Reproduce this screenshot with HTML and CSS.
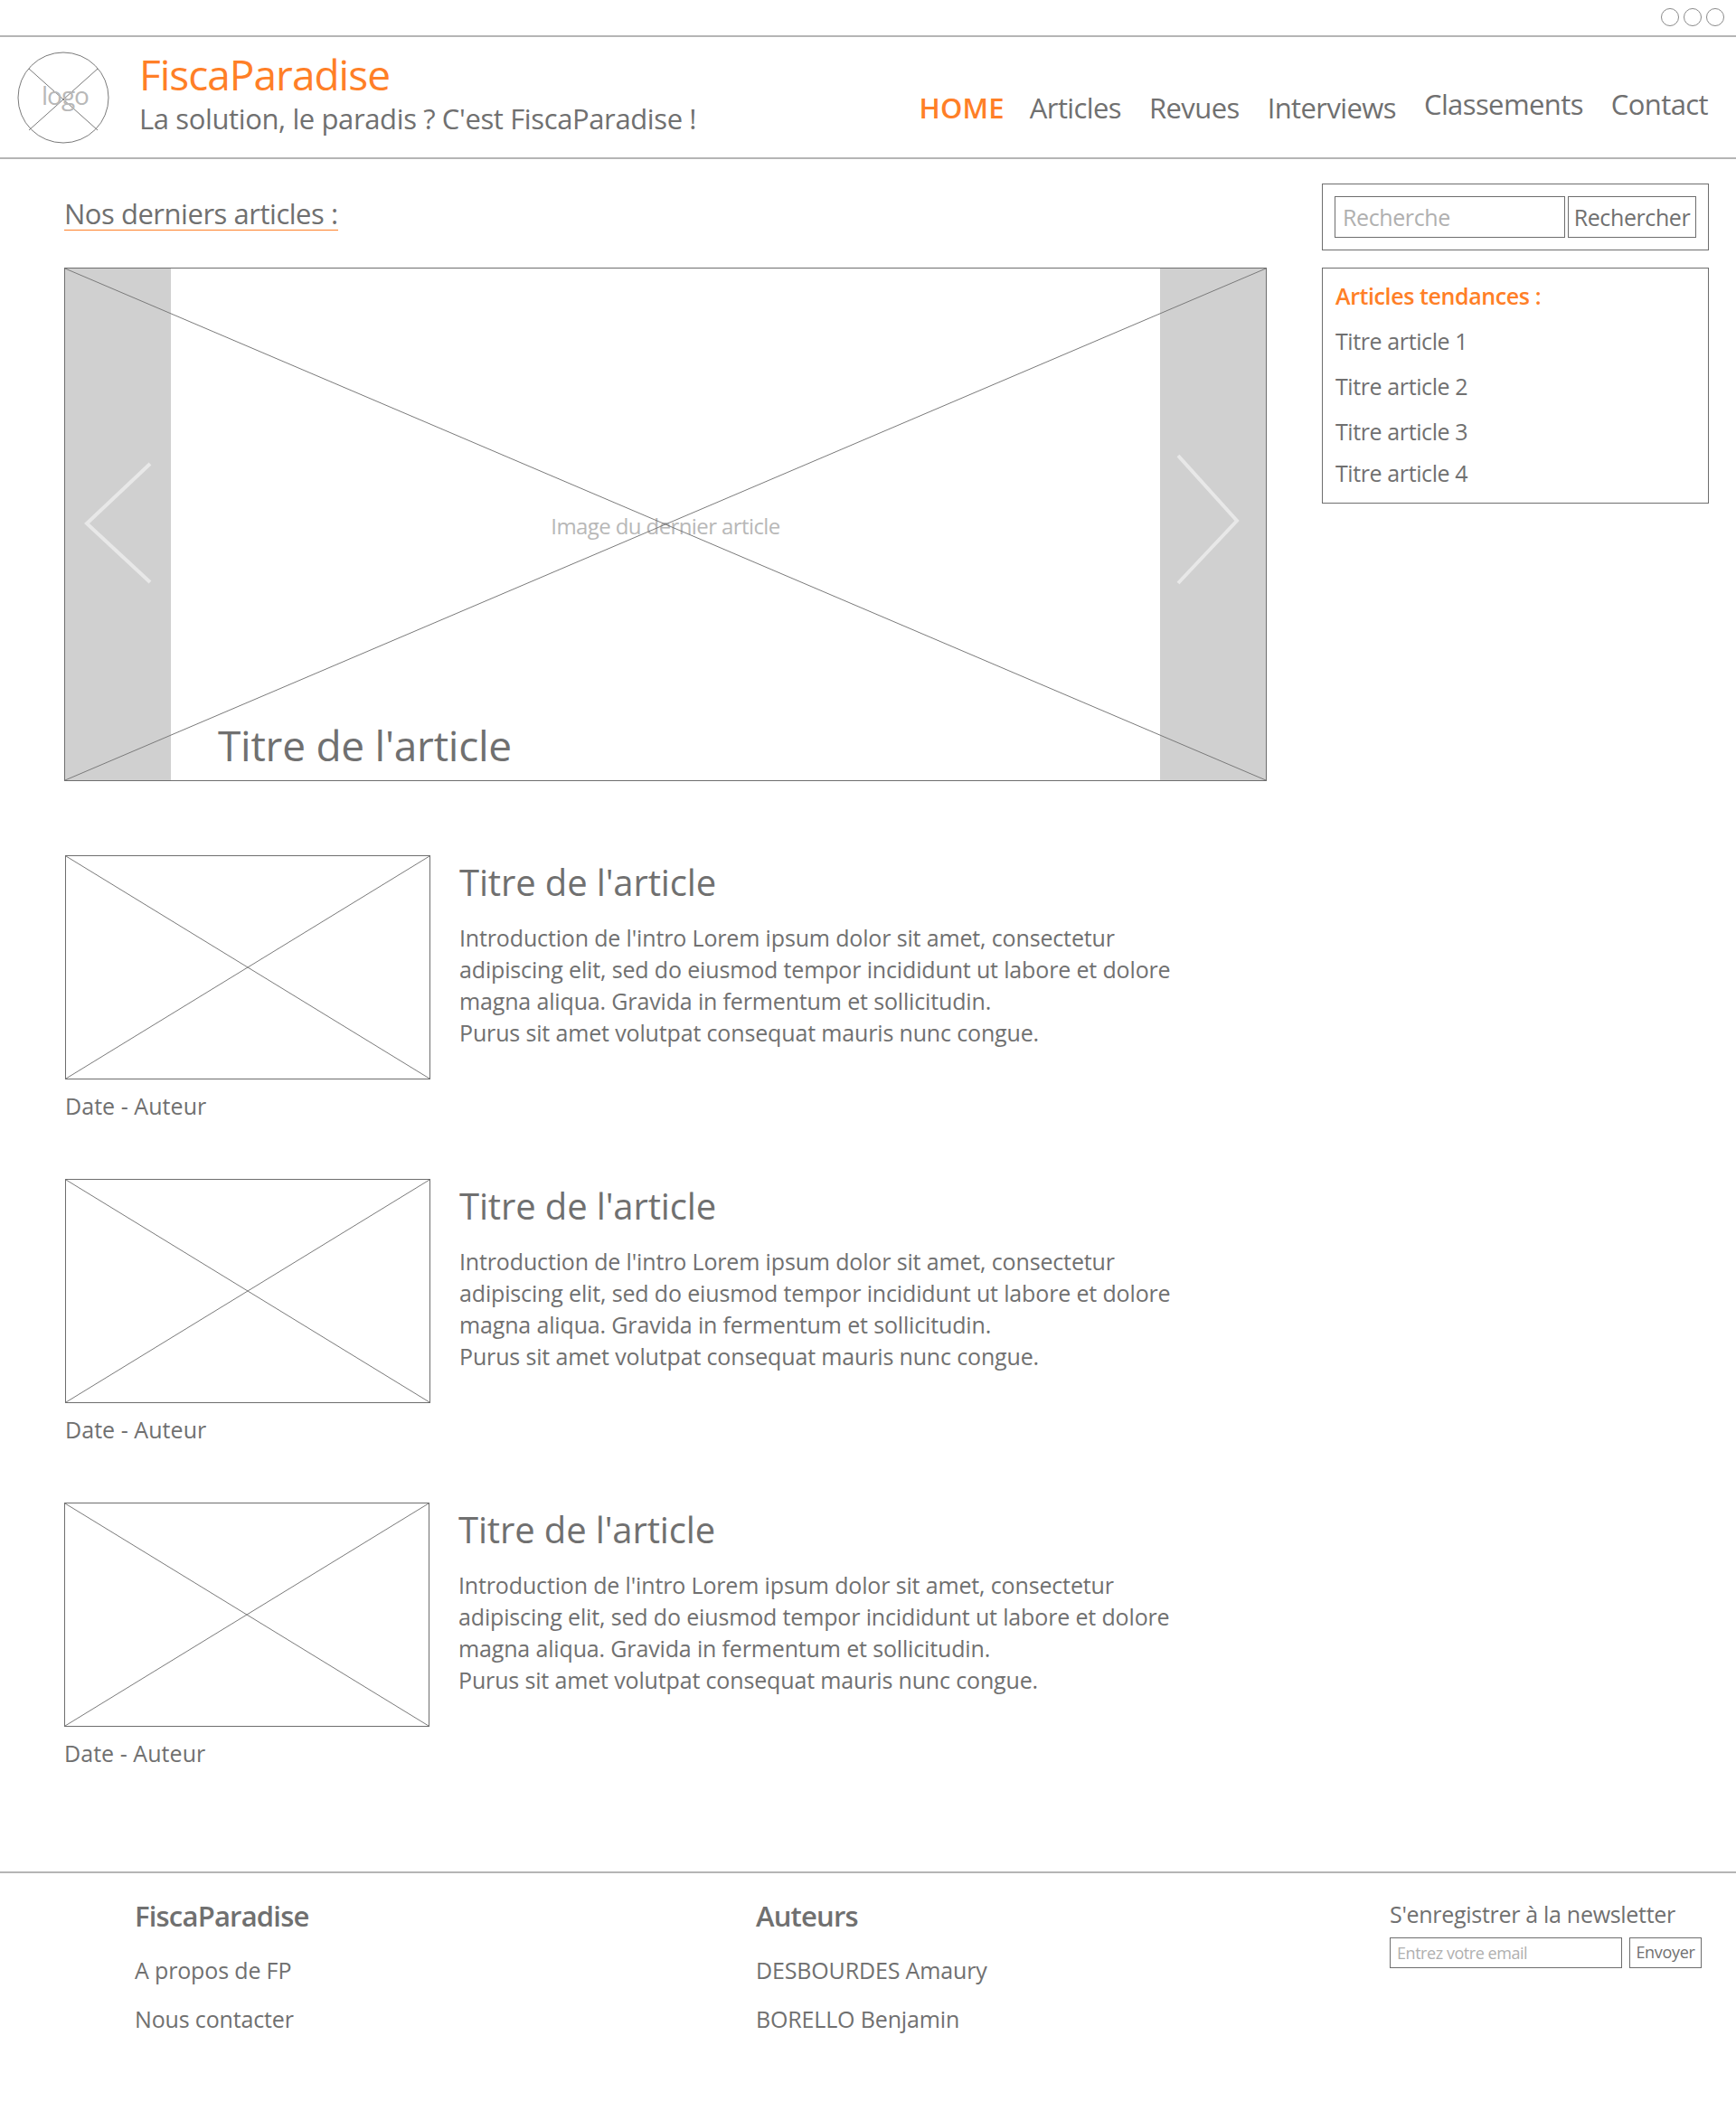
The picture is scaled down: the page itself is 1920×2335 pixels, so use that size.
FILE: index.html
```html
<!DOCTYPE html>
<html lang="fr">
<head>
  <meta charset="UTF-8" />
  <title>FiscaParadise</title>
  <link rel="stylesheet" href="styles.css">
</head>
<body>
  <div class="topbar">
    <span class="dot"></span>
    <span class="dot"></span>
    <span class="dot"></span>
  </div>

  <header class="header">
    <div class="logo">
      <svg class="logo-svg" viewBox="0 0 102 102">
        <circle cx="51" cy="51" r="50" />
        <line x1="13" y1="19" x2="89" y2="87" />
        <line x1="89" y1="19" x2="13" y2="87" />
      </svg>
      <span class="logo-text">logo</span>
    </div>
    <div class="brand">
      <div class="brand-name">FiscaParadise</div>
      <div class="brand-tag">La solution, le paradis ? C'est FiscaParadise !</div>
    </div>
    <nav class="nav">
      <a class="nav-link active">HOME</a>
      <a class="nav-link">Articles</a>
      <a class="nav-link">Revues</a>
      <a class="nav-link">Interviews</a>
      <a class="nav-link raised">Classements</a>
      <a class="nav-link raised">Contact</a>
    </nav>
  </header>

  <div class="main">
    <main class="content">
      <h2 class="section-title">Nos derniers articles :</h2>

      <div class="carousel">
        <div class="side">
          <svg class="chevron" width="118" height="160" viewBox="0 0 118 160">
            <polyline points="94,18 24,84 94,149" />
          </svg>
        </div>
        <div class="slide">
          <span class="slide-label">Image du dernier article</span>
          <span class="slide-title">Titre de l'article</span>
        </div>
        <div class="side">
          <svg class="chevron" width="118" height="160" viewBox="0 0 118 160">
            <polyline points="20,9 85,81 20,150" />
          </svg>
        </div>
        <svg class="cross" viewBox="0 0 100 100" preserveAspectRatio="none">
          <line x1="0" y1="0" x2="100" y2="100" />
          <line x1="100" y1="0" x2="0" y2="100" />
        </svg>
      </div>

      <article class="article">
        <div class="article-left">
          <div class="thumb">
            <svg class="cross" viewBox="0 0 100 100" preserveAspectRatio="none">
              <line x1="0" y1="0" x2="100" y2="100" />
              <line x1="100" y1="0" x2="0" y2="100" />
            </svg>
          </div>
          <div class="meta">Date - Auteur</div>
        </div>
        <div class="article-body">
          <h3 class="article-title">Titre de l'article</h3>
          <p class="article-text">Introduction de l'intro Lorem ipsum dolor sit amet, consectetur<br>adipiscing elit, sed do eiusmod tempor incididunt ut labore et dolore<br>magna aliqua. Gravida in fermentum et sollicitudin.<br>Purus sit amet volutpat consequat mauris nunc congue.</p>
        </div>
      </article>

      <article class="article">
        <div class="article-left">
          <div class="thumb">
            <svg class="cross" viewBox="0 0 100 100" preserveAspectRatio="none">
              <line x1="0" y1="0" x2="100" y2="100" />
              <line x1="100" y1="0" x2="0" y2="100" />
            </svg>
          </div>
          <div class="meta">Date - Auteur</div>
        </div>
        <div class="article-body">
          <h3 class="article-title">Titre de l'article</h3>
          <p class="article-text">Introduction de l'intro Lorem ipsum dolor sit amet, consectetur<br>adipiscing elit, sed do eiusmod tempor incididunt ut labore et dolore<br>magna aliqua. Gravida in fermentum et sollicitudin.<br>Purus sit amet volutpat consequat mauris nunc congue.</p>
        </div>
      </article>

      <article class="article last">
        <div class="article-left">
          <div class="thumb">
            <svg class="cross" viewBox="0 0 100 100" preserveAspectRatio="none">
              <line x1="0" y1="0" x2="100" y2="100" />
              <line x1="100" y1="0" x2="0" y2="100" />
            </svg>
          </div>
          <div class="meta">Date - Auteur</div>
        </div>
        <div class="article-body">
          <h3 class="article-title">Titre de l'article</h3>
          <p class="article-text">Introduction de l'intro Lorem ipsum dolor sit amet, consectetur<br>adipiscing elit, sed do eiusmod tempor incididunt ut labore et dolore<br>magna aliqua. Gravida in fermentum et sollicitudin.<br>Purus sit amet volutpat consequat mauris nunc congue.</p>
        </div>
      </article>
    </main>

    <aside class="sidebar">
      <div class="box search">
        <div class="search-input">Recherche</div>
        <div class="search-btn">Rechercher</div>
      </div>
      <div class="box trends">
        <div class="trends-title">Articles tendances :</div>
        <div class="trend">Titre article 1</div>
        <div class="trend">Titre article 2</div>
        <div class="trend">Titre article 3</div>
        <div class="trend tight">Titre article 4</div>
      </div>
    </aside>
  </div>

  <footer class="footer">
    <div class="foot-col first">
      <div class="foot-title">FiscaParadise</div>
      <div class="foot-link">A propos de FP</div>
      <div class="foot-link">Nous contacter</div>
    </div>
    <div class="foot-col second">
      <div class="foot-title">Auteurs</div>
      <div class="foot-link">DESBOURDES Amaury</div>
      <div class="foot-link">BORELLO Benjamin</div>
    </div>
    <div class="news">
      <div class="news-title">S'enregistrer à la newsletter</div>
      <div class="news-form">
        <div class="news-input">Entrez votre email</div>
        <div class="news-btn">Envoyer</div>
      </div>
    </div>
  </footer>
</body>
</html>
```

FILE: styles.css
```css
body {
  margin: 0;
  background: #fff;
  color: #707070;
  font-family: "Open Sans", "Noto Sans", sans-serif;
  font-size: 25px;
  letter-spacing: -0.15px;
}

/* top strip */
.topbar {
  box-sizing: border-box;
  height: 41px;
  padding: 9px 13px 0 0;
  display: flex;
  justify-content: flex-end;
  gap: 5px;
  border-bottom: 2px solid #b5b5b5;
}
.dot {
  box-sizing: border-box;
  width: 20px;
  height: 20px;
  border: 1px solid #8a8a8a;
  border-radius: 50%;
}

/* header */
.header {
  box-sizing: border-box;
  height: 135px;
  display: flex;
  border-bottom: 2px solid #b5b5b5;
}
.logo {
  position: relative;
  width: 102px;
  height: 102px;
  margin: 16px 0 0 19px;
}
.logo-svg {
  display: block;
  fill: none;
  stroke: #7a7a7a;
  stroke-width: 1;
}
.logo-text {
  position: absolute;
  left: 27px;
  top: 29px;
  font-size: 28px;
  line-height: 38px;
  letter-spacing: -1px;
  color: #b8b8b8;
}
.brand {
  margin: 10px 0 0 33px;
}
.brand-name {
  font-size: 46px;
  line-height: 62px;
  letter-spacing: -1px;
  color: #ff7f27;
}
.brand-tag {
  font-size: 31px;
  line-height: 36px;
  letter-spacing: -0.38px;
}
.nav {
  margin-left: auto;
  padding: 0 31px 34px 0;
  display: flex;
  align-items: flex-end;
  gap: 31px;
  font-size: 31px;
  line-height: 42px;
  letter-spacing: -0.6px;
}
.nav-link.active {
  margin-right: -3px;
  color: #ff7f27;
  font-weight: 600;
  letter-spacing: 0.2px;
}
.nav-link.raised {
  margin-bottom: 4px;
}

/* main columns */
.main {
  height: 1894px;
  display: flex;
  padding-left: 71px;
}
.content {
  width: 1330px;
}
.section-title {
  display: inline-block;
  margin: 42px 0 0;
  font-size: 31px;
  font-weight: 400;
  line-height: 36px;
  letter-spacing: -0.47px;
  border-bottom: 1px solid #ff7f27;
}

/* carousel */
.carousel {
  position: relative;
  box-sizing: border-box;
  height: 568px;
  margin-top: 41px;
  display: flex;
  border: 1px solid #6e6e6e;
}
.side {
  width: 117px;
  background: #d0d0d0;
}
.chevron {
  display: block;
  margin-top: 198px;
  fill: none;
  stroke: #e8e8e8;
  stroke-width: 4;
}
.slide {
  flex: 1;
  position: relative;
}
.slide-label {
  position: absolute;
  left: 0;
  right: 0;
  top: 269px;
  text-align: center;
  font-size: 24px;
  line-height: 32px;
  letter-spacing: -0.6px;
  color: #b8b8b8;
}
.slide-title {
  position: absolute;
  left: 52px;
  top: 496px;
  font-size: 46px;
  line-height: 62px;
  letter-spacing: -0.25px;
}
.cross {
  position: absolute;
  left: 0;
  top: 0;
  width: 100%;
  height: 100%;
  stroke: #7a7a7a;
}
.cross line {
  stroke-width: 1;
  vector-effect: non-scaling-stroke;
}

/* article rows */
.article {
  height: 276px;
  margin-top: 82px;
  display: flex;
  gap: 32px;
  padding-left: 1px;
}
.article.last {
  padding-left: 0;
}
.article-left {
  width: 404px;
}
.thumb {
  position: relative;
  box-sizing: border-box;
  height: 248px;
  border: 1px solid #6e6e6e;
}
.meta {
  margin-top: 12px;
  line-height: 34px;
  letter-spacing: 0.05px;
}
.article-title {
  margin: 0;
  padding-top: 3px;
  font-size: 40px;
  font-weight: 400;
  line-height: 54px;
  letter-spacing: -0.13px;
}
.article-text {
  margin: 17px 0 0;
  line-height: 35px;
  white-space: nowrap;
}

/* sidebar */
.sidebar {
  width: 428px;
  margin-left: 61px;
}
.box {
  box-sizing: border-box;
  border: 1px solid #6e6e6e;
}
.search {
  height: 74px;
  margin-top: 27px;
  padding: 13px;
  display: flex;
  gap: 3px;
  letter-spacing: -0.4px;
}
.search-input {
  box-sizing: border-box;
  width: 255px;
  height: 46px;
  padding-left: 8px;
  line-height: 44px;
  color: #b0b0b0;
  border: 1px solid #6e6e6e;
}
.search-btn {
  box-sizing: border-box;
  width: 142px;
  height: 46px;
  text-align: center;
  line-height: 44px;
  border: 1px solid #6e6e6e;
}
.trends {
  height: 261px;
  margin-top: 19px;
  padding: 12px 14px 0;
  letter-spacing: -0.4px;
}
.trends-title {
  line-height: 36px;
  font-weight: 600;
  color: #ff7f27;
}
.trend {
  margin-top: 14px;
  line-height: 36px;
}
.trend.tight {
  margin-top: 10px;
}

/* footer */
.footer {
  box-sizing: border-box;
  height: 265px;
  display: flex;
  border-top: 2px solid #b5b5b5;
}
.foot-col.first {
  width: 687px;
  padding-left: 149px;
}
.foot-col.second {
  width: 701px;
}
.foot-title {
  margin-top: 26px;
  font-size: 31px;
  font-weight: 600;
  line-height: 42px;
  letter-spacing: -0.8px;
}
.foot-link {
  margin-top: 20px;
  line-height: 34px;
}
.foot-title + .foot-link {
  margin-top: 22px;
}
.news {
  padding-top: 28px;
}
.news-title {
  line-height: 34px;
  letter-spacing: -0.3px;
}
.news-form {
  margin-top: 9px;
  display: flex;
  gap: 8px;
  font-size: 18px;
  letter-spacing: -0.3px;
}
.news-input {
  box-sizing: border-box;
  width: 257px;
  height: 34px;
  padding-left: 7px;
  line-height: 32px;
  letter-spacing: -0.45px;
  color: #b0b0b0;
  border: 1px solid #6e6e6e;
}
.news-btn {
  box-sizing: border-box;
  width: 80px;
  height: 34px;
  text-align: center;
  line-height: 30px;
  border: 1px solid #6e6e6e;
}
```
